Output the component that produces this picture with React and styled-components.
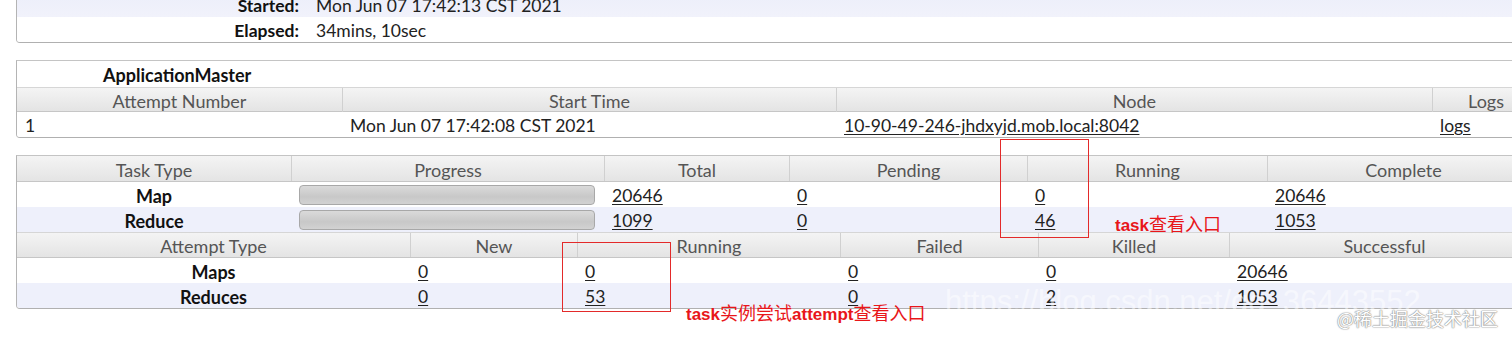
import React from 'react'
import styled, { createGlobalStyle } from 'styled-components'

const GlobalStyle = createGlobalStyle`
  html, body {
    margin: 0;
    padding: 0;
    background: #fff;
  }
  body {
    font-family: Lato, "Open Sans", "Noto Sans CJK SC", sans-serif;
    font-size: 17.5px;
    color: #222;
  }
`

const Page = styled.div`
  position: relative;
  width: 1512px;
  height: 340px;
  overflow: hidden;
  padding-left: 16px;
  box-sizing: border-box;
`

const Panel = styled.div`
  width: 1522px;
  margin-top: ${p => p.$top}px;
  border-left: 1px solid #b4b4b4;
  border-bottom: 1px solid #b0b0b0;
  border-top: ${p => (p.$noTop ? 'none' : '1px solid #c4c4c4')};
  border-radius: 0 0 0 4px;
  overflow: hidden;
  background: #fff;
`

const InfoRow = styled.div`
  display: grid;
  grid-template-columns: 291px 1fr;
  height: 25px;
  box-sizing: border-box;
  padding-top: 2px;
  align-items: center;
  background: ${p => (p.$alt ? 'linear-gradient(#eceefa, #f1f2fb)' : '#fff')};
`

const InfoLabel = styled.div`
  text-align: right;
  padding-right: 9px;
  font-weight: 700;
  color: #111;
`

const InfoValue = styled.div`
  padding-left: 8px;
  color: #222;
`

const Caption = styled.div`
  height: 26px;
  box-sizing: border-box;
  padding-top: 2px;
  display: flex;
  align-items: center;
  padding-left: 86px;
  font-weight: 700;
  font-size: 18px;
  color: #111;
`

const Row = styled.div`
  display: grid;
  grid-template-columns: ${p => p.$cols};
  height: 25px;
  box-sizing: border-box;
  padding-top: 2px;
  align-items: center;
  background: ${p => (p.$alt ? '#eef0fb' : '#fff')};
`

const HeadRow = styled.div`
  display: grid;
  grid-template-columns: ${p => p.$cols};
  height: ${p => p.$h || 25}px;
  box-sizing: border-box;
  background: linear-gradient(#f4f4f4, #e4e4e4);
  border-bottom: 1px solid #c6c6c6;
  border-top: ${p => (p.$ruled ? '1px solid #d6d6d6' : 'none')};
`

const HeadCell = styled.div`
  display: flex;
  align-items: center;
  justify-content: center;
  padding-top: 2px;
  font-size: 18px;
  color: #555;
  white-space: nowrap;
  & + & {
    border-left: 1px solid #d0d0d0;
  }
`

const Cell = styled.div`
  padding-left: ${p => (p.$center ? 0 : 8)}px;
  text-align: ${p => (p.$center ? 'center' : 'left')};
  font-weight: ${p => (p.$bold ? 700 : 400)};
  font-size: ${p => (p.$bold ? 18 : 17.5)}px;
  color: ${p => (p.$bold ? '#111' : '#222')};
  white-space: nowrap;
`

const Link = styled.a`
  color: #222;
  text-decoration: underline;
  text-underline-offset: 2px;
`

const BarCell = styled.div`
  padding: 0 9px 2px 8px;
`

const Bar = styled.div`
  height: 20px;
  box-sizing: border-box;
  border: 1px solid #a8a8a8;
  border-radius: 4px;
  background: linear-gradient(#dadada, #c8c8c8 60%, #d2d2d2);
`

const RedBox = styled.div`
  position: absolute;
  left: ${p => p.$x}px;
  top: ${p => p.$y}px;
  width: ${p => p.$w}px;
  height: ${p => p.$h}px;
  border: 1px solid #e32a2a;
  box-sizing: border-box;
  pointer-events: none;
`

const Note = styled.div`
  position: absolute;
  left: ${p => p.$x}px;
  top: ${p => p.$y}px;
  color: #e8161a;
  white-space: nowrap;
`

const NoteLatin = styled.span`
  font-family: "Liberation Sans", Arial, sans-serif;
  font-weight: 700;
  font-size: 17px;
`

const NoteCjk = styled.span`
  font-family: "Noto Sans CJK SC", sans-serif;
  font-weight: 400;
  font-size: 18px;
`

const Watermark = styled.div`
  position: absolute;
  left: 945px;
  top: 284px;
  font-family: "Liberation Sans", Arial, sans-serif;
  font-size: 31px;
  color: rgba(255, 255, 255, 0.5);
  white-space: nowrap;
`

const Stamp = styled.div`
  position: absolute;
  left: 1337px;
  top: 305px;
  font-family: "Noto Sans CJK SC", sans-serif;
  font-size: 18px;
  color: #fff;
  text-shadow: 0 0 1px #8a8a8a, 0 0 1px #8a8a8a, 0 0 2px #aaa;
  white-space: nowrap;
`

const amCols = '325px 494px 596px 1fr'
const taskCols = '274px 313px 185px 238px 240px 1fr'
const attemptCols = '393px 167px 263px 198px 191px 1fr'

const tasks = [
  { name: 'Map', total: '20646', pending: '0', running: '0', complete: '20646' },
  { name: 'Reduce', total: '1099', pending: '0', running: '46', complete: '1053' },
]

const attempts = [
  { name: 'Maps', fresh: '0', running: '0', failed: '0', killed: '0', ok: '20646' },
  { name: 'Reduces', fresh: '0', running: '53', failed: '0', killed: '2', ok: '1053' },
]

const App = () => {
  return (
    <>
      <GlobalStyle />
      <Page>
        <Panel $top={-8} $noTop>
          <InfoRow $alt>
            <InfoLabel>Started:</InfoLabel>
            <InfoValue>Mon Jun 07 17:42:13 CST 2021</InfoValue>
          </InfoRow>
          <InfoRow>
            <InfoLabel>Elapsed:</InfoLabel>
            <InfoValue>34mins, 10sec</InfoValue>
          </InfoRow>
        </Panel>

        <Panel $top={17}>
          <Caption>ApplicationMaster</Caption>
          <HeadRow $cols={amCols} $ruled>
            <HeadCell>Attempt Number</HeadCell>
            <HeadCell>Start Time</HeadCell>
            <HeadCell>Node</HeadCell>
            <HeadCell>Logs</HeadCell>
          </HeadRow>
          <Row $cols={amCols}>
            <Cell>1</Cell>
            <Cell>Mon Jun 07 17:42:08 CST 2021</Cell>
            <Cell><Link>10-90-49-246-jhdxyjd.mob.local:8042</Link></Cell>
            <Cell><Link>logs</Link></Cell>
          </Row>
        </Panel>

        <Panel $top={17}>
          <HeadRow $cols={taskCols} $h={26}>
            <HeadCell>Task Type</HeadCell>
            <HeadCell>Progress</HeadCell>
            <HeadCell>Total</HeadCell>
            <HeadCell>Pending</HeadCell>
            <HeadCell>Running</HeadCell>
            <HeadCell>Complete</HeadCell>
          </HeadRow>
          {tasks.map((t, i) => (
            <Row key={t.name} $cols={taskCols} $alt={i % 2 === 1}>
              <Cell $center $bold>{t.name}</Cell>
              <BarCell><Bar /></BarCell>
              <Cell><Link>{t.total}</Link></Cell>
              <Cell><Link>{t.pending}</Link></Cell>
              <Cell><Link>{t.running}</Link></Cell>
              <Cell><Link>{t.complete}</Link></Cell>
            </Row>
          ))}
          <HeadRow $cols={attemptCols} $ruled $h={26}>
            <HeadCell>Attempt Type</HeadCell>
            <HeadCell>New</HeadCell>
            <HeadCell>Running</HeadCell>
            <HeadCell>Failed</HeadCell>
            <HeadCell>Killed</HeadCell>
            <HeadCell>Successful</HeadCell>
          </HeadRow>
          {attempts.map((a, i) => (
            <Row key={a.name} $cols={attemptCols} $alt={i % 2 === 1}>
              <Cell $center $bold>{a.name}</Cell>
              <Cell><Link>{a.fresh}</Link></Cell>
              <Cell><Link>{a.running}</Link></Cell>
              <Cell><Link>{a.failed}</Link></Cell>
              <Cell><Link>{a.killed}</Link></Cell>
              <Cell><Link>{a.ok}</Link></Cell>
            </Row>
          ))}
        </Panel>

        <RedBox $x={1000} $y={139} $w={89} $h={99} />
        <Note $x={1115} $y={210}>
          <NoteLatin>task</NoteLatin><NoteCjk>查看入口</NoteCjk>
        </Note>

        <RedBox $x={562} $y={242} $w={109} $h={70} />
        <Note $x={686} $y={299}>
          <NoteLatin>task</NoteLatin><NoteCjk>实例尝试</NoteCjk>
          <NoteLatin>attempt</NoteLatin><NoteCjk>查看入口</NoteCjk>
        </Note>

        <Watermark>https://blog.csdn.net/qq_36443552</Watermark>
        <Stamp>@稀土掘金技术社区</Stamp>
      </Page>
    </>
  )
}

export default App
